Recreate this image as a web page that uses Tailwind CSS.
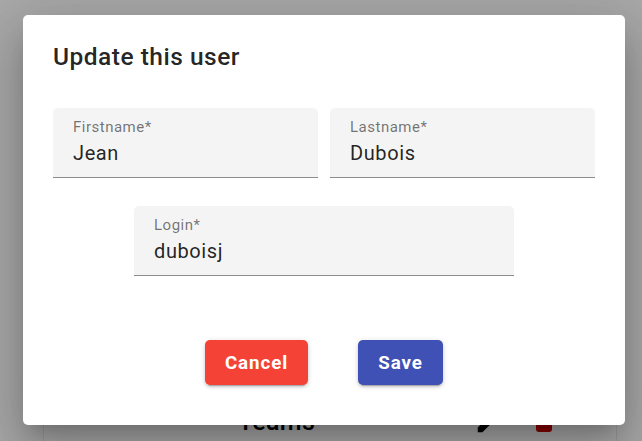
<!DOCTYPE html>
<html lang="en">
<head>
<meta charset="utf-8">
<title>Update this user</title>
<script src="https://cdn.jsdelivr.net/npm/@tailwindcss/browser@4"></script>
</head>
<body class="relative h-[441px] w-[642px] overflow-hidden bg-[#a8a8a8] font-['Roboto',sans-serif]">
  <!-- Dimmed card behind the dialog -->
  <div class="absolute left-[43px] top-[100px] h-[341px] w-[574px] overflow-hidden border-x border-[#9c9c9c] bg-[#abaaab]">
    <span class="absolute left-[194px] top-[307px] text-[25px] leading-[30px] font-medium tracking-[0.3px] text-black">Teams</span>
    <svg class="absolute left-[430px] top-[306px]" width="30" height="30" viewBox="0 0 24 24"><path d="M3 17.25V21h3.75L17.81 9.94l-3.75-3.75L3 17.25z"/></svg>
    <div class="absolute left-[492px] top-[312px] h-[20px] w-[16px] rounded-b-[3px] bg-[#8b0000]"></div>
  </div>

  <main class="absolute left-[23px] top-[15px] flex h-[410px] w-[602px] flex-col rounded-[5px] bg-white px-[30px] shadow-[0_14px_19px_-9px_rgba(0,0,0,0.2),0_30px_48px_4px_rgba(0,0,0,0.14),0_11px_58px_10px_rgba(0,0,0,0.12)]">
    <h1 class="mt-[22px] h-[41px] text-[24.5px] leading-[40px] font-medium tracking-[0.5px] text-black/87">Update this user</h1>
    <div class="mt-[30px] flex gap-[12px]">
      <label class="flex h-[70px] w-[265px] flex-col rounded-t-[5px] border-b border-[#8c8c8c] bg-[#f4f4f4] px-[20px] pt-[9px]">
        <span class="h-[20px] text-[15px] leading-[20px] tracking-[0.5px] text-black/54">Firstname*</span>
        <span class="mt-[1px] h-[30px] text-[20px] leading-[30px] tracking-[0.6px] text-black/87">Jean</span>
      </label>
      <label class="flex h-[70px] w-[265px] flex-col rounded-t-[5px] border-b border-[#8c8c8c] bg-[#f4f4f4] px-[20px] pt-[9px]">
        <span class="h-[20px] text-[15px] leading-[20px] tracking-[0.5px] text-black/54">Lastname*</span>
        <span class="mt-[1px] h-[30px] text-[20px] leading-[30px] tracking-[0.6px] text-black/87">Dubois</span>
      </label>
    </div>
    <label class="ml-[81px] mt-[28px] flex h-[70px] w-[380px] flex-col rounded-t-[5px] border-b border-[#8c8c8c] bg-[#f4f4f4] px-[20px] pt-[9px]">
      <span class="h-[20px] text-[15px] leading-[20px] tracking-[0.5px] text-black/54">Login*</span>
      <span class="mt-[1px] h-[30px] text-[20px] leading-[30px] tracking-[0.6px] text-black/87">duboisj</span>
    </label>
    <div class="mt-[64px] flex justify-center gap-[50px]">
      <button class="h-[45px] w-[103px] rounded-[5px] bg-[#f44336] pt-[2px] text-[18.75px] font-bold tracking-[0.9px] text-white shadow-[0_4px_1px_-3px_rgba(0,0,0,0.2),0_2px_3px_0_rgba(0,0,0,0.14),0_1px_6px_0_rgba(0,0,0,0.12)]">Cancel</button>
      <button class="h-[45px] w-[85px] rounded-[5px] bg-[#3f51b5] pt-[2px] text-[18.75px] font-bold tracking-[0.9px] text-white shadow-[0_4px_1px_-3px_rgba(0,0,0,0.2),0_2px_3px_0_rgba(0,0,0,0.14),0_1px_6px_0_rgba(0,0,0,0.12)]">Save</button>
    </div>
  </main>
</body>
</html>
